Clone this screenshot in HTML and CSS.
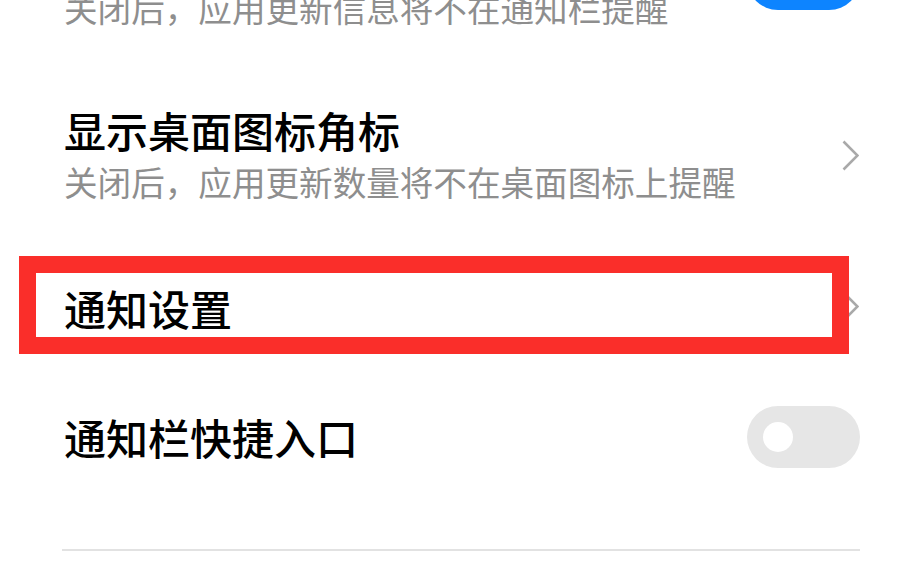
FILE: index.html
```html
<!DOCTYPE html>
<html lang="zh-CN">
<head>
    <meta charset="UTF-8">
    <meta name="viewport" content="width=device-width, initial-scale=1.0">
    <title>通知管理</title>
    <link rel="stylesheet" href="styles.css">
</head>
<body>

<div class="list">
    <div class="row row-double">
        <div class="text">
            <p class="title">显示通知</p>
            <p class="sub">关闭后，应用更新信息将不在通知栏提醒</p>
        </div>
        <span class="switch switch-on switch-up"><span class="knob"></span></span>
    </div>

    <div class="row row-double">
        <div class="text">
            <p class="title">显示桌面图标角标</p>
            <p class="sub">关闭后，应用更新数量将不在桌面图标上提醒</p>
        </div>
        <svg class="arrow" width="17" height="31" viewBox="0 0 17 31">
            <polyline points="1.5,1.5 15.5,15.5 1.5,29.5" fill="none" stroke="#a9a9a9" stroke-width="2.6"/>
        </svg>
    </div>

    <div class="row row-single">
        <div class="text">
            <p class="title">通知设置</p>
        </div>
        <svg class="arrow" width="17" height="31" viewBox="0 0 17 31">
            <polyline points="1.5,1.5 15.5,15.5 1.5,29.5" fill="none" stroke="#a9a9a9" stroke-width="2.6"/>
        </svg>
        <!-- cadre rouge d'annotation -->
        <div class="mark"></div>
    </div>

    <div class="row row-single">
        <div class="text">
            <p class="title">通知栏快捷入口</p>
        </div>
        <span class="switch switch-small-up"><span class="knob"></span></span>
    </div>

    <hr class="divider">
</div>

</body>
</html>
```

FILE: styles.css
```css
body {
    margin: 0;
    background: #ffffff;
    font-family: "Noto Sans CJK SC", "Noto Sans", sans-serif;
    overflow: hidden;
}
.list {
    margin-top: -102px;
}
.row {
    position: relative;
    display: flex;
    align-items: center;
    justify-content: space-between;
    padding: 0 63px 0 64px;
}
.row-double {
    height: 174px;
}
.row-single {
    height: 129px;
}
.text {
    margin-bottom: 6px;
}
.title {
    margin: 0;
    font-size: 42px;
    line-height: 52px;
    font-weight: 500;
    color: #000;
}
.sub {
    margin: 0;
    font-size: 33.6px;
    line-height: 52px;
    color: #8e8e8e;
}
.arrow {
    display: block;
    margin-right: 1px;
    margin-bottom: 8px;
}
.switch {
    position: relative;
    display: block;
    width: 113px;
    height: 62px;
    border-radius: 31px;
    background: #e6e6e6;
}
.switch .knob {
    position: absolute;
    top: 16px;
    left: 16px;
    width: 30px;
    height: 30px;
    border-radius: 50%;
    background: #fff;
}
.switch-on {
    background: #0d84ff;
}
.switch-on .knob {
    left: auto;
    right: 16px;
}
.switch-up {
    margin-bottom: 12px;
}
.switch-small-up {
    margin-bottom: 5px;
}
.mark {
    position: absolute;
    top: 10px;
    left: 19px;
    width: 796px;
    height: 64px;
    border: 17px solid #fa2e2a;
}
.divider {
    margin: 45px 63px 0 62px;
    border: none;
    height: 2px;
    background: #e2e2e2;
}
```
